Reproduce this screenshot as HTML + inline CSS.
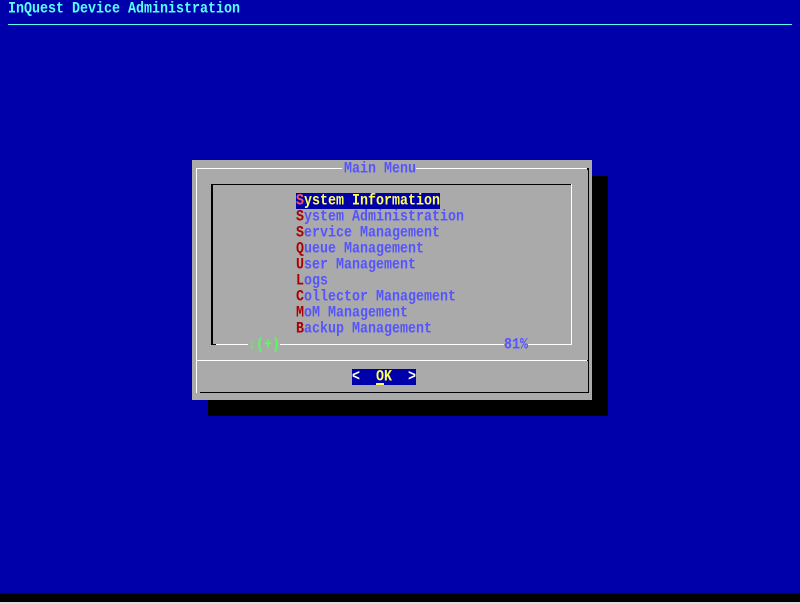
<!DOCTYPE html>
<html><head><style>
*{margin:0;padding:0}
body{width:800px;height:604px;background:#ddd;position:relative;overflow:hidden;font-family:"Liberation Mono","DejaVu Sans Mono",monospace;font-size:13.33px;font-weight:bold;line-height:16px}
div{position:absolute}
.t{position:absolute;white-space:pre;transform:scaleY(1.15);transform-origin:0 0;margin-top:1px}
</style></head><body>
<div style="left:0;top:0;width:800px;height:593px;background:#0000aa"></div>
<div style="left:0;top:593px;width:800px;height:9px;background:#000"></div>
<span class="t" style="left:8px;top:0;color:#55ffff">InQuest Device Administration</span>
<div style="left:8px;top:24px;width:784px;height:1px;background:#55ffff"></div>
<div style="left:208px;top:176px;width:400px;height:240px;background:#000"></div>
<div style="left:192px;top:160px;width:400px;height:240px;background:#aaaaaa"></div>
<div style="left:196px;top:168px;width:146px;height:1px;background:#fff"></div>
<div style="left:416px;top:168px;width:172px;height:1px;background:#fff"></div>
<div style="left:587px;top:168px;width:2px;height:2px;background:#000"></div>
<div style="left:196px;top:168px;width:1px;height:225px;background:#fff"></div>
<div style="left:588px;top:169px;width:1px;height:224px;background:#000"></div>
<div style="left:200px;top:392px;width:389px;height:1px;background:#000"></div>
<div style="left:197px;top:360px;width:391px;height:1px;background:#fff"></div>
<div style="left:587px;top:360px;width:2px;height:1px;background:#000"></div>
<span class="t" style="left:344px;top:160px;color:#5555ff">Main Menu</span>
<div style="left:211px;top:184px;width:361px;height:1px;background:#000"></div>
<div style="left:211px;top:184px;width:2px;height:161px;background:#000"></div>
<div style="left:571px;top:184px;width:1px;height:161px;background:#fff"></div>
<div style="left:213px;top:344px;width:359px;height:1px;background:#fff"></div>
<div style="left:211px;top:344px;width:5px;height:1px;background:#000"></div>
<div style="left:248px;top:336px;width:32px;height:16px;background:#aaaaaa"></div>
<span class="t" style="left:248px;top:336px;color:#55ff55">↓(+)</span>
<div style="left:504px;top:336px;width:24px;height:16px;background:#aaaaaa"></div>
<span class="t" style="left:504px;top:336px;color:#5555ff">81%</span>
<div style="left:296px;top:193px;width:144px;height:16px;background:#0000aa"></div>
<span class="t" style="left:296px;top:192px;color:#ffff55"><span style="color:#ff5555">S</span>ystem Information</span>
<span class="t" style="left:296px;top:208px;color:#5555ff"><span style="color:#aa0000">S</span>ystem Administration</span>
<span class="t" style="left:296px;top:224px;color:#5555ff"><span style="color:#aa0000">S</span>ervice Management</span>
<span class="t" style="left:296px;top:240px;color:#5555ff"><span style="color:#aa0000">Q</span>ueue Management</span>
<span class="t" style="left:296px;top:256px;color:#5555ff"><span style="color:#aa0000">U</span>ser Management</span>
<span class="t" style="left:296px;top:272px;color:#5555ff"><span style="color:#aa0000">L</span>ogs</span>
<span class="t" style="left:296px;top:288px;color:#5555ff"><span style="color:#aa0000">C</span>ollector Management</span>
<span class="t" style="left:296px;top:304px;color:#5555ff"><span style="color:#aa0000">M</span>oM Management</span>
<span class="t" style="left:296px;top:320px;color:#5555ff"><span style="color:#aa0000">B</span>ackup Management</span>
<div style="left:352px;top:369px;width:64px;height:16px;background:#0000aa"></div>
<span class="t" style="left:352px;top:368px;color:#fff">&lt;</span>
<span class="t" style="left:376px;top:368px;color:#ffff55">OK</span>
<div style="left:376px;top:383px;width:8px;height:2px;background:#ffff55"></div>
<span class="t" style="left:408px;top:368px;color:#fff">&gt;</span>
</body></html>
